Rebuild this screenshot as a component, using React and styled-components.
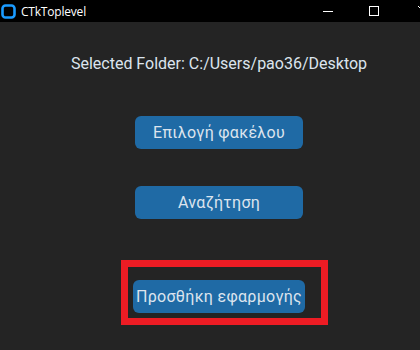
import React from 'react';
import styled, {createGlobalStyle} from 'styled-components';

const Global = createGlobalStyle`
html,body{
    margin:0;
    padding:0;
    background:#242424;
    overflow:hidden;
}
`;

const Window = styled.div`
width:420px;
height:350px;
display:flex;
flex-direction:column;
background:#242424;
overflow:hidden;
`;

const TitleBar = styled.div`
height:22px;
flex:none;
background:#000;
display:flex;
align-items:center;
padding-left:1px;
color:#fff;
font-family:"Open Sans","Noto Sans",sans-serif;
font-size:12px;
`;

const Title = styled.span`
margin-left:5px;
letter-spacing:-0.2px;
`;

const Controls = styled.div`
margin-left:auto;
display:flex;
align-items:center;
height:100%;
`;

const Ctl = styled.div`
width:${p => p.w}px;
height:100%;
display:flex;
align-items:center;
justify-content:${p => p.end ? 'flex-end' : 'center'};
`;

const Content = styled.div`
flex:1;
display:flex;
flex-direction:column;
align-items:center;
padding-left:18px;
font-family:Roboto,"Noto Sans",sans-serif;
color:#dce4ee;
`;

const Label = styled.div`
margin-top:32px;
font-size:16px;
line-height:20px;
`;

const Button = styled.div`
width:${p => p.w}px;
height:33px;
box-sizing:border-box;
margin-top:${p => p.mt}px;
background:#1f6aa5;
border-radius:6px;
display:flex;
align-items:center;
justify-content:center;
font-size:16px;
letter-spacing:0.3px;
color:#dce4ee;
`;

const Marked = styled.div`
position:relative;
margin-top:61px;
`;

const Highlight = styled.div`
position:absolute;
top:-20px;
left:-12px;
right:-23px;
bottom:-12px;
border:7px solid #ed1c24;
pointer-events:none;
`;

const App = () => {
    return (
        <Window>
            <Global />
            <TitleBar>
                <svg width="15" height="15" viewBox="0 0 15 15">
                    <rect x="1.5" y="1.5" width="12" height="12" rx="3" fill="none" stroke="#1a9bff" strokeWidth="2.6" />
                </svg>
                <Title>CTkToplevel</Title>
                <Controls>
                    <Ctl w={46}>
                        <svg width="10" height="10" viewBox="0 0 10 10">
                            <line x1="0" y1="5.5" x2="10" y2="5.5" stroke="#fff" strokeWidth="1" />
                        </svg>
                    </Ctl>
                    <Ctl w={46}>
                        <svg width="10" height="10" viewBox="0 0 10 10">
                            <rect x="0.5" y="0.5" width="9" height="9" fill="none" stroke="#fff" strokeWidth="1" />
                        </svg>
                    </Ctl>
                    <Ctl w={23} end>
                        <svg width="2" height="10" viewBox="0 0 2 10">
                            <line x1="0" y1="0" x2="10" y2="10" stroke="#fff" strokeWidth="1" />
                        </svg>
                    </Ctl>
                </Controls>
            </TitleBar>
            <Content>
                <Label>Selected Folder: C:/Users/pao36/Desktop</Label>
                <Button w={168} mt={42}>Επιλογή φακέλου</Button>
                <Button w={168} mt={37}>Αναζήτηση</Button>
                <Marked>
                    <Button w={172} mt={0}>Προσθήκη εφαρμογής</Button>
                    <Highlight />
                </Marked>
            </Content>
        </Window>
    );
};

export default App;
